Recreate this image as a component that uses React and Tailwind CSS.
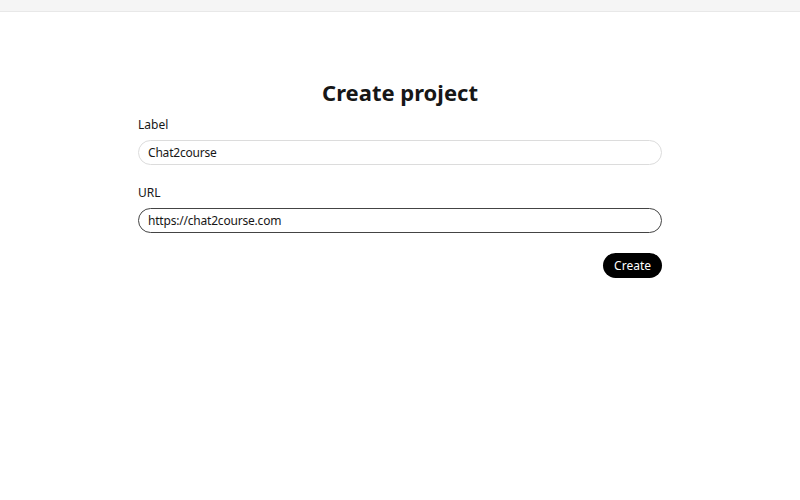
export default function App() {
  return (
    <div className="min-h-[500px] bg-white text-[#171717]" style={{ fontFamily: '"Noto Sans", "Open Sans", sans-serif' }}>
      <div className="h-[12px] bg-[#f5f5f5] border-b border-[#e8e8e8]" />
      <div className="w-[524px] mx-auto pt-[64px]">
        <h1 className="text-center text-[22px] font-bold leading-[32px] text-[#171717]">Create project</h1>
        <div className="mt-[8px]">
          <label className="block text-[12px] leading-[18px]">Label</label>
          <input
            defaultValue="Chat2course"
            className="mt-[6px] block w-full h-[25px] rounded-full border border-[#dcdcdc] px-[9px] text-[12px] tracking-[-0.2px] outline-none"
          />
        </div>
        <div className="mt-[19px]">
          <label className="block text-[12px] leading-[18px]">URL</label>
          <input
            defaultValue="https://chat2course.com"
            className="mt-[6px] block w-full h-[25px] rounded-full border border-[#444] px-[9px] text-[12px] tracking-[-0.2px] outline-none"
          />
        </div>
        <div className="mt-[20px] flex justify-end">
          <button className="h-[25px] px-[11px] rounded-full bg-black text-white text-[12px]">Create</button>
        </div>
      </div>
    </div>
  );
}
